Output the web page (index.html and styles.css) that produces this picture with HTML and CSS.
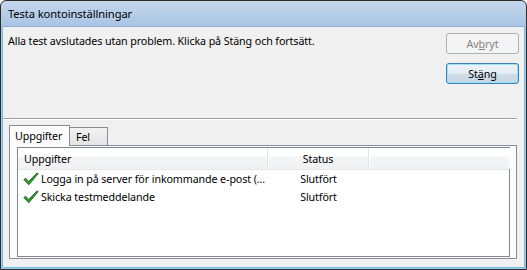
FILE: index.html
```html
<!DOCTYPE html>
<html lang="sv">
<head>
<meta charset="utf-8">
<title>Testa kontoinställningar</title>
<link rel="stylesheet" href="styles.css">
</head>
<body>
<div class="window">
  <div class="titlebar"><span class="title">Testa kontoinställningar</span></div>
  <div class="client">
    <div class="top">
      <p class="message">Alla test avslutades utan problem. Klicka på Stäng och fortsätt.</p>
      <div class="buttons">
        <button class="btn disabled" disabled>Av<u>b</u>ryt</button>
        <button class="btn default">St<u>ä</u>ng</button>
      </div>
    </div>
    <div class="separator"></div>
    <div class="tabs">
      <div class="tabstrip">
        <div class="tab active">Uppgifter</div>
        <div class="tab">Fel</div>
      </div>
      <div class="panel">
        <div class="listview">
          <div class="header">
            <div class="col c1">Uppgifter</div>
            <div class="col c2">Status</div>
            <div class="col c3"></div>
          </div>
          <div class="row">
            <div class="cell c1">
              <svg class="check" width="16" height="14" viewBox="0 0 16 14"><path d="M0.8 7.6 L2.6 6.2 L5.6 9.4 L14.2 0.8 L15.2 1.8 L5.8 12.8 Z" fill="#2f9a2f" stroke="#17601a" stroke-width="0.8" stroke-linejoin="round"/></svg>
              <span>Logga in på server för inkommande e-post (...</span>
            </div>
            <div class="cell c2">Slutfört</div>
          </div>
          <div class="row">
            <div class="cell c1">
              <svg class="check" width="16" height="14" viewBox="0 0 16 14"><path d="M0.8 7.6 L2.6 6.2 L5.6 9.4 L14.2 0.8 L15.2 1.8 L5.8 12.8 Z" fill="#2f9a2f" stroke="#17601a" stroke-width="0.8" stroke-linejoin="round"/></svg>
              <span>Skicka testmeddelande</span>
            </div>
            <div class="cell c2">Slutfört</div>
          </div>
        </div>
      </div>
    </div>
  </div>
</div>
</body>
</html>
```
FILE: styles.css
```css
* { box-sizing: border-box; }
html, body { margin: 0; padding: 0; }
body {
  width: 527px;
  height: 270px;
  overflow: hidden;
  font-family: "Noto Sans", sans-serif;
  font-size: 10.7px;
  letter-spacing: -0.1px;
  color: #000;
  background: #fff;
  white-space: nowrap;
}
.window {
  width: 527px;
  height: 270px;
  border: 1px solid #2b2b2b;
  border-radius: 6px 6px 0 0;
  background: linear-gradient(#c4d7ec, #a9c5e4 25px, #a9c5e4);
  display: flex;
  flex-direction: column;
  overflow: hidden;
}
.titlebar {
  height: 25px;
  flex: none;
  padding-left: 7px;
  display: flex;
  align-items: center;
  font-size: 11.2px;
}
.client {
  flex: 1;
  margin: 0 1px 1px 1px;
  border: 1px solid #6cc3ea;
  border-top: 1px solid #8eaed2;
  background: #f0f0f0;
  display: flex;
  flex-direction: column;
}
.top {
  display: flex;
  justify-content: space-between;
  padding: 6px 5px 0 5px;
  height: 91px;
}
.message { margin: 1px 0 0 0; line-height: 15px; }
.buttons {
  display: flex;
  flex-direction: column;
  gap: 9px;
}
.btn {
  width: 73px;
  height: 21px;
  font: inherit;
  letter-spacing: inherit;
  padding: 0;
  border-radius: 3px;
  color: #000;
}
.btn.disabled {
  border: 1px solid #adb2b5;
  background: #f4f4f4;
  color: #838383;
}
.btn.default {
  border: 1px solid #3c7fb1;
  background: linear-gradient(#eef4f8, #e3ecf3 50%, #cfdde8 51%, #c7d7e5);
  box-shadow: inset 0 0 0 1px #9fe0f8;
}
.separator {
  height: 2px;
  margin: 0 7px 0 0;
  border-top: 1px solid #a0a0a0;
  border-bottom: 1px solid #ffffff;
}
.tabs {
  flex: 1;
  display: flex;
  flex-direction: column;
  padding: 4px 7px 8px 6px;
}
.tabstrip {
  display: flex;
  align-items: flex-end;
  height: 21px;
}
.tab {
  height: 18px;
  padding: 0 6px;
  border: 1px solid #898c95;
  border-bottom: none;
  border-left: none;
  background: linear-gradient(#f2f2f2, #e4e4e4);
  display: flex;
  align-items: center;
  width: 38px;
}
.tab.active {
  height: 21px;
  width: 61px;
  border-left: 1px solid #898c95;
  background: #fcfcfc;
  margin-bottom: -1px;
  position: relative;
  z-index: 1;
  padding: 0 5px;
}
.panel {
  flex: 1;
  border: 1px solid #898c95;
  background: #fcfcfc;
  padding: 1px 6px 1px 7px;
  display: flex;
}
.listview {
  flex: 1;
  border: 1px solid #828790;
  background: #fff;
}
.header {
  display: flex;
  height: 22px;
  background: linear-gradient(#ffffff 0, #ffffff 40%, #f3f4f6 41%, #f1f2f4);
  border-bottom: 1px solid #e3e6ea;
}
.col {
  display: flex;
  align-items: center;
  border-right: 1px solid #e2e4e8;
  box-shadow: 1px 0 0 #fff;
}
.c1 { width: 250px; padding-left: 6px; }
.c2 { width: 101px; justify-content: center; }
.c3 { flex: 1; border-right: none; }
.row {
  display: flex;
  height: 18px;
  align-items: center;
}
.cell { display: flex; align-items: center; }
.cell.c1 { padding-left: 5px; gap: 2px; }
.cell.c2 { justify-content: center; }
.check { flex: none; }
```
